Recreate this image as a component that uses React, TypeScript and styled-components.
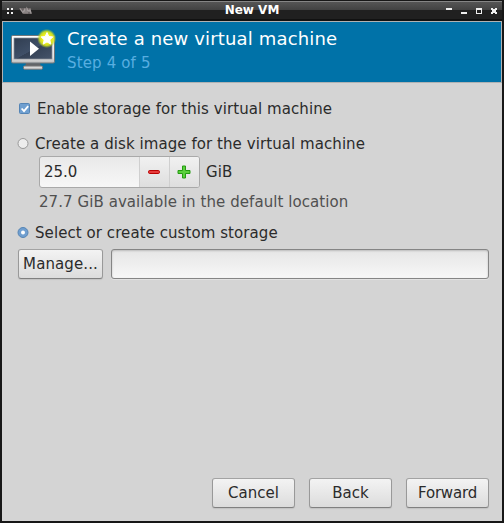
import React from "react";
import styled, { createGlobalStyle, css } from "styled-components";

const GlobalStyle = createGlobalStyle`
  * { box-sizing: border-box; }
  body {
    margin: 0;
    background: #171717;
    overflow: hidden;
    font-family: "DejaVu Sans", sans-serif;
    font-size: 15px;
    color: #2b2b2b;
  }
  button, input { font: inherit; color: inherit; }
`;

const Window = styled.div`
  width: 504px;
  height: 523px;
  display: flex;
  flex-direction: column;
  background: #171717;
  padding: 0 2px 2px;
`;

const TitleBar = styled.div`
  height: 21px;
  flex: none;
  display: grid;
  grid-template-columns: 1fr auto 1fr;
  align-items: center;
  background: linear-gradient(#171717 0 1px, #858585 1px 2px, #555 2px, #424242 10px, #202020 10px, #202020 19px, #111 19px);
`;

const WindowTitle = styled.div`
  color: #fff;
  font-size: 12px;
  font-weight: bold;
  line-height: 19px;
  height: 20px;
`;

const TitleIcons = styled.svg<{ $end?: boolean }>`
  display: block;
  justify-self: ${(p) => (p.$end ? "end" : "start")};
`;

const Panel = styled.main`
  flex: 1;
  display: flex;
  flex-direction: column;
  background: #d4d4d4;
  letter-spacing: 0.07px;
`;

const Header = styled.header`
  height: 62px;
  flex: none;
  display: flex;
  background: #0072a8;
  border: 1px solid #b0b2b3;
  padding-left: 6px;
`;

const HeaderText = styled.div`
  padding: 5px 0 0 8px;
`;

const Heading = styled.h1`
  margin: 0;
  color: #fff;
  font-size: 18px;
  font-weight: normal;
  line-height: 24px;
  letter-spacing: 0.16px;
`;

const Step = styled.div`
  color: #58aee0;
  line-height: 24px;
  letter-spacing: 0.15px;
`;

const Form = styled.section`
  flex: 1;
  padding: 14px 13px 0 15px;
`;

const OptionRow = styled.label<{ $top?: number }>`
  display: flex;
  align-items: center;
  gap: 6px;
  height: 24px;
  margin-top: ${(p) => p.$top ?? 0}px;
`;

const Indented = styled.div`
  padding-left: 22px;
  margin-top: -1px;
`;

const SizeRow = styled.div`
  display: flex;
  align-items: center;
  gap: 6px;
  height: 33px;
`;

const SpinBox = styled.div`
  width: 161px;
  height: 32px;
  display: flex;
  border: 1px solid #a9a9a9;
  border-radius: 3px;
  background: linear-gradient(#e9e9e9, #f7f7f7);
  overflow: hidden;
`;

const SpinInput = styled.input`
  width: 99px;
  border: 0;
  outline: 0;
  padding: 1px 0 0 4px;
  background: transparent;
`;

const SpinButton = styled.button`
  width: 30px;
  padding: 0 2px 0 0;
  display: grid;
  place-items: center;
  border: 0;
  border-left: 1px solid #cfcfcf;
  background: linear-gradient(#f1f1f1, #dedede);
`;

const Hint = styled.div`
  height: 27px;
  line-height: 28px;
  color: #505050;
`;

const edge = css`
  height: 30px;
  border: 1px solid #969696;
  border-radius: 3px;
`;

const Button = styled.button<{ $tight?: boolean }>`
  ${edge}
  width: 83px;
  padding: 0 0 1px;
  border-color: #a3a3a3 #999 #808080;
  background: linear-gradient(#f3f3f3, #dcdcdc);
  box-shadow: 0 1px 1px #c2c2c2;
  letter-spacing: ${(p) => (p.$tight ? "-0.2px" : "0")};
`;

const ManageButton = styled(Button)`
  width: 85px;
  letter-spacing: 0.1px;
`;

const PathInput = styled.input`
  ${edge}
  flex: 1;
  outline: 0;
  border-color: #858585;
  background: linear-gradient(#e6e6e6, #f7f7f7);
  box-shadow: inset 0 1px 2px #bbb, 0 1px 0 #e2e2e2;
`;

const PathRow = styled.div`
  display: flex;
  gap: 8px;
  margin-top: 4px;
  padding-left: 1px;
`;

const Actions = styled.footer`
  display: flex;
  justify-content: flex-end;
  gap: 14px;
  padding: 0 13px 13px;
`;

function MachineIcon() {
  return (
    <svg width="50" height="60" viewBox="9 22 50 60">
      <defs>
        <linearGradient id="frame" x2="0" y2="1">
          <stop stopColor="#fff" />
          <stop offset=".8" stopColor="#e2e2e2" />
          <stop offset="1" stopColor="#bcbcbc" />
        </linearGradient>
        <linearGradient id="screen" x2="1" y2="1">
          <stop stopColor="#303d50" />
          <stop offset=".52" stopColor="#405068" />
          <stop offset=".53" stopColor="#344155" />
          <stop offset="1" stopColor="#46546a" />
        </linearGradient>
        <radialGradient id="glow">
          <stop offset=".4" stopColor="#f7f51c" />
          <stop offset=".72" stopColor="#d9e51c" stopOpacity=".9" />
          <stop offset="1" stopColor="#9bc633" stopOpacity="0" />
        </radialGradient>
      </defs>
      <path d="M26 63h14l1 4H25z" fill="#626568" />
      <rect x="23.5" y="66" width="19" height="3.2" rx="1" fill="#d8d8d8" stroke="#777" />
      <rect x="11.5" y="35.5" width="43" height="27.5" rx="1.3" fill="url(#frame)" stroke="#70777b" />
      <rect x="14" y="38" width="38" height="21" fill="url(#screen)" stroke="#8a9199" strokeWidth=".7" />
      <path d="M30 41.5v14.5l9-7.2z" fill="#fff" />
      <circle cx="46.7" cy="38.5" r="9.7" fill="url(#glow)" />
      <path d="m47 32.5 1.8 4 4 .4-3 3 1 4.2-3.8-2.2-3.8 2.2 1-4.2-3.1-3 4.1-.4z" fill="#fff" stroke="#fff" strokeLinejoin="round" />
    </svg>
  );
}

function CheckMark() {
  return (
    <svg width="14" height="14" viewBox="0 0 14 14">
      <rect x="2.5" y="1.5" width="10" height="10" rx="1" fill="#6f9fd0" stroke="#5484b5" />
      <path d="m4.6 6.5 2.4 2.6 4.2-5" fill="none" stroke="#fff" strokeWidth="1.8" />
    </svg>
  );
}

function RadioMark({ selected = false }: { selected?: boolean }) {
  return (
    <svg width="12" height="12" viewBox="0 0 12 12" overflow="visible">
      <circle cx="6" cy="5.5" r="5" fill={selected ? "#709fd0" : "#ededed"} stroke={selected ? "#5685b5" : "#999"} />
      {selected && <circle cx="6" cy="5.5" r="2" fill="#fff" />}
    </svg>
  );
}

export default function App() {
  return (
    <>
      <GlobalStyle />
      <Window>
        <TitleBar>
          <TitleIcons width="34" height="20" viewBox="2 0 34 20">
            <path d="M7 7h2v2H7zm4 0h2v2h-2zM7 11h2v2H7zm4 0h2v2h-2z" fill="#eee" />
            <path d="M19 7h11l2 6h-9z" fill="#686262" />
            <path d="M20 7.500l3 4 2-4v5M27 12.500v-5l2 3 1-2 1 4" fill="none" stroke="#a09a9a" strokeWidth="1.200" />
          </TitleIcons>
          <WindowTitle>New VM</WindowTitle>
          <TitleIcons $end width="63" height="20" viewBox="439 0 63 20">
            <path d="M446 7h6v2h-6zm15 4h6v2h-6z" fill="#eee" />
            <path d="M476 7h6v6h-6zm1 2v3h4V9z" fill="#eee" fillRule="evenodd" />
            <path d="M491 7h2v1h2V7h2v2h-1v2h1v2h-2v-1h-2v1h-2v-2h1V9h-1z" fill="#eee" />
          </TitleIcons>
        </TitleBar>
        <Panel>
          <Header>
            <MachineIcon />
            <HeaderText>
              <Heading>Create a new virtual machine</Heading>
              <Step>Step 4 of 5</Step>
            </HeaderText>
          </Header>
          <Form>
            <OptionRow>
              <CheckMark />
              Enable storage for this virtual machine
            </OptionRow>
            <OptionRow $top={11}>
              <RadioMark />
              <span>Create a disk image for the virtual machine</span>
            </OptionRow>
            <Indented>
              <SizeRow>
                <SpinBox>
                  <SpinInput defaultValue="25.0" />
                  <SpinButton aria-label="Decrease">
                    <svg width="14" height="14">
                      <rect x="1.5" y="5.5" width="11" height="3" rx="1.2" fill="#e63b3b" stroke="#b90000" />
                    </svg>
                  </SpinButton>
                  <SpinButton aria-label="Increase">
                    <svg width="14" height="14">
                      <path d="M5.500 1h3v4.500H13v3H8.500V13h-3V8.500H1v-3h4.500z" fill="#5bd03d" stroke="#259b12" strokeLinejoin="round" />
                    </svg>
                  </SpinButton>
                </SpinBox>
                <span>GiB</span>
              </SizeRow>
              <Hint>27.7 GiB available in the default location</Hint>
            </Indented>
            <OptionRow $top={6}>
              <RadioMark selected />
              <span>Select or create custom storage</span>
            </OptionRow>
            <PathRow>
              <ManageButton>Manage...</ManageButton>
              <PathInput aria-label="Storage path" />
            </PathRow>
          </Form>
          <Actions>
            <Button>Cancel</Button>
            <Button>Back</Button>
            <Button $tight>Forward</Button>
          </Actions>
        </Panel>
      </Window>
    </>
  );
}
